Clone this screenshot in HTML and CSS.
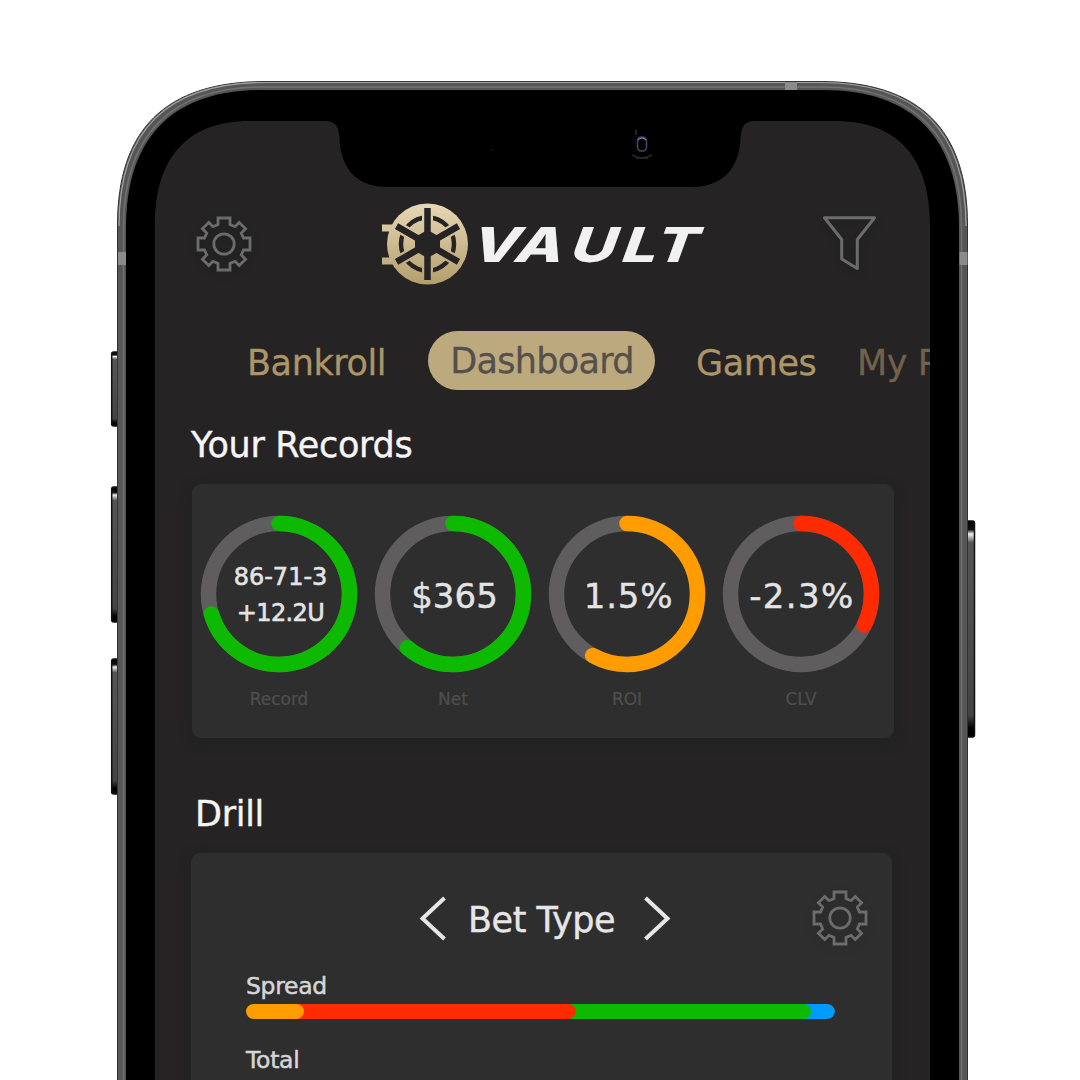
FILE: index.html
```html
<!DOCTYPE html>
<html lang="en">
<head>
<meta charset="utf-8">
<title>Vault</title>
<link rel="stylesheet" href="styles.css">
</head>
<body>
<div class="stage">
  <svg class="device" width="1080" height="1080" viewBox="0 0 1080 1080" aria-hidden="true">
    <defs>
      <linearGradient id="key" x1="0" x2="0" y1="0" y2="1">
        <stop offset="0" stop-color="#000"/><stop offset=".04" stop-color="#111"/><stop offset=".06" stop-color="#eee"/><stop offset=".1" stop-color="#555"/><stop offset=".9" stop-color="#444"/><stop offset=".96" stop-color="#000"/>
      </linearGradient>
    </defs>
    <g fill="url(#key)" stroke="#111" stroke-width="1.5">
      <rect x="111.700" y="352" width="9" height="74" rx="2"/>
      <rect x="111.700" y="487" width="9" height="135" rx="2"/>
      <rect x="111.700" y="659" width="9" height="135" rx="2"/>
      <rect x="965" y="521" width="9.500" height="216" rx="2"/>
    </g>
    <path class="rim" d="M117.500 1090V225C117.500 130 165 81.500 265 81.500H820C920 81.500 967.500 130 967.500 225V1090"/>
    <path class="rim-light" d="M123.500 1090V227C123.500 136 170 87 263 87H822C915 87 961.500 136 961.500 227V1090"/>
    <path class="rim-shine" d="M119 226C119 131 166 82.500 265 82.500H820C919 82.500 966 131 966 226"/>
    <path class="marker" d="M785 82h12v8h-12zM118 252h8v13h-8zM959.500 252h8v13h-8z"/>
    <path d="M126 1090V228C126 138 172 90 262 90H823C913 90 959 138 959 228V1090z"/>
    <path class="glass" d="M155 1090V225C155 160 185 121 250 121H325C336 121 339 127 339.500 139C341 170 358 187 387 187H692C721 187 739 170 740.500 139C741 127 744 121 755 121H835C900 121 930 160 930 225V1090z"/>
    <g fill="none">
      <rect x="637.500" y="137" width="9" height="14" rx="4" stroke="#46436a" stroke-width="1.600"/>
      <path d="M638 140q4-4 8 0" stroke="#9d9cc0"/>
      <path d="M632 155q10 6 20 0M636 158h12M636 130v5" stroke="#242424" stroke-width="2"/>
    </g>
    <circle cx="492" cy="150" r="1" fill="#181818"/>
  </svg>

  <main class="screen">
    <header class="top">
      <svg class="gear" viewBox="-28 -28 56 56"><use href="#gear"/></svg>
      <svg class="logo" viewBox="380 200 330 88" role="img" aria-label="Vault">
        <defs>
          <linearGradient id="gold" x1="0" x2="0" y1="0" y2="1"><stop offset="0" stop-color="#e8d8b6"/><stop offset="1" stop-color="#b39d6c"/></linearGradient>
          <mask id="wheel" maskUnits="userSpaceOnUse" x="380" y="200" width="90" height="90">
            <g transform="translate(427.500 244)">
              <circle r="40.500" fill="#fff"/>
              <path d="M-45.500-19.500h14v7h-14zM-45.500 13.500h14v7h-14z" fill="#fff"/>
              <circle r="26.500" fill="none" stroke="#000" stroke-width="4.500"/>
              <path d="M0-32V32M-27.700-16L27.700 16M-27.700 16L27.700-16" stroke="#fff" stroke-width="11"/>
              <path d="M0-36V36M-31-17.900L31 17.900M-31 17.900L31-17.900" stroke="#000" stroke-width="6.500"/>
              <path d="M0-14L12.500-7V7L0 14L-12.500 7V-7z"/>
            </g>
          </mask>
        </defs>
        <rect x="380" y="203" width="90" height="82" fill="url(#gold)" mask="url(#wheel)"/>
        <text class="wordmark" transform="translate(465 261.500) skewX(-20) scale(1.3 1)" x="2 36 78.500 118 143.500" y="0">VAULT</text>
      </svg>
      <svg class="funnel" viewBox="820 214 60 60"><path d="M824.500 217.800H874.600L857.300 239.500V268.500L841.700 259V239.500z"/></svg>
    </header>

    <nav class="tabs">
      <a class="tab">Bankroll</a>
      <a class="tab active">Dashboard</a>
      <a class="tab">Games</a>
      <a class="tab faded">My P</a>
    </nav>

    <h2 class="title records-title">Your Records</h2>
    <section class="card records">
      <div class="stat">
        <div class="dial">
          <svg class="ring green" viewBox="0 0 158 158"><circle class="track" cx="79" cy="79" r="70.500"/><circle class="arc" cx="79" cy="79" r="70.500" pathLength="100" stroke-dasharray="70.4 100"/></svg>
          <div class="value small"><span>86-71-3</span><span>+12.2U</span></div>
        </div>
        <div class="label">Record</div>
      </div>
      <div class="stat">
        <div class="dial">
          <svg class="ring green" viewBox="0 0 158 158"><circle class="track" cx="79" cy="79" r="70.500"/><circle class="arc" cx="79" cy="79" r="70.500" pathLength="100" stroke-dasharray="61.2 100"/></svg>
          <div class="value">$365</div>
        </div>
        <div class="label">Net</div>
      </div>
      <div class="stat">
        <div class="dial">
          <svg class="ring orange" viewBox="0 0 158 158"><circle class="track" cx="79" cy="79" r="70.500"/><circle class="arc" cx="79" cy="79" r="70.500" pathLength="100" stroke-dasharray="58.1 100"/></svg>
          <div class="value percent">1.5%</div>
        </div>
        <div class="label">ROI</div>
      </div>
      <div class="stat">
        <div class="dial">
          <svg class="ring red" viewBox="0 0 158 158"><circle class="track" cx="79" cy="79" r="70.500"/><circle class="arc" cx="79" cy="79" r="70.500" pathLength="100" stroke-dasharray="32.3 100"/></svg>
          <div class="value percent negative">-2.3%</div>
        </div>
        <div class="label">CLV</div>
      </div>
    </section>

    <h2 class="title drill-title">Drill</h2>
    <section class="card drill">
      <div class="picker">
        <svg class="chevron" viewBox="0 0 30 46"><path d="M27.500 3L5.500 23.500L27.500 44"/></svg>
        <span class="picker-name">Bet Type</span>
        <svg class="chevron" viewBox="0 0 30 46"><path d="M2.500 3L24.500 23.500L2.500 44"/></svg>
        <svg class="gear" viewBox="-28 -28 56 56">
          <g id="gear"><path d="M-6-26H6V-19.500L11-17.300L15.200-21.600L21.600-15.200L17.300-11L19.500-6H26V6H19.500L17.300 11L21.600 15.200L15.200 21.600L11 17.300L6 19.500V26H-6V19.500L-11 17.300L-15.200 21.600L-21.600 15.200L-17.300 11L-19.500 6H-26V-6H-19.500L-17.300-11L-21.600-15.200L-15.200-21.600L-11-17.300L-6-19.500z"/><circle r="10.200"/></g>
        </svg>
      </div>
      <div class="row-name">Spread</div>
      <div class="bar">
        <i class="seg orange" style="width:58px"></i><i class="seg red" style="width:272px"></i><i class="seg green" style="width:235px"></i><i class="seg blue" style="width:24px"></i>
      </div>
      <div class="row-name">Total</div>
    </section>
  </main>
</div>
</body>
</html>
```

FILE: styles.css
```css
* { box-sizing: border-box; }
body { margin: 0; background: #fff; }
.stage {
  position: relative;
  width: 1080px;
  height: 1080px;
  overflow: hidden;
  font-family: "DejaVu Sans", sans-serif;
}
.device { position: absolute; inset: 0; }
.rim { fill: #565656; stroke: #333; stroke-width: 1; }
.rim-light { fill: none; stroke: #727272; stroke-width: 1.5; }
.rim-shine { fill: none; stroke: #a5a5a5; stroke-width: 1.2; }
.marker { fill: #8b8b8b; }
.glass { fill: #252324; }

.screen {
  position: relative;
  width: 775px;
  height: 1080px;
  margin-left: 155px;
  padding-top: 200px;
  overflow: hidden;
}
.top {
  display: flex;
  align-items: center;
  height: 88px;
  padding-left: 41px;
}
.gear {
  flex: none;
  width: 56px;
  height: 56px;
  fill: none;
  stroke: #6c6c6c;
  stroke-width: 2.8;
  filter: drop-shadow(0 3px 4px rgba(0, 20, 10, .2));
}
.logo { flex: none; width: 330px; height: 88px; margin-left: 128px; overflow: visible; }
.wordmark { font: 800 48px Inter, sans-serif; fill: #f1f1f1; }
.funnel {
  flex: none;
  width: 60px;
  height: 60px;
  margin-left: 110px;
  fill: none;
  stroke: #6c6c6c;
  stroke-width: 3;
  stroke-linejoin: round;
  filter: drop-shadow(0 3px 4px rgba(0, 20, 10, .2));
}

.tabs {
  display: flex;
  align-items: center;
  height: 59px;
  margin-top: 43px;
  padding-left: 92px;
  color: #ac9668;
  font-size: 35px;
  white-space: nowrap;
  letter-spacing: -.4px;
  -webkit-text-stroke: .3px;
}
.tab { flex: none; width: 181px; padding-top: 6px; line-height: 57px; }
.tab.active {
  width: 227px;
  height: 59px;
  margin-right: 41px;
  padding: 2px 0 0 1px;
  border-radius: 30px;
  background: #bca97d;
  color: #55504b;
  text-align: center;
  letter-spacing: -.7px;
}
.tab + .tab:nth-child(3) { width: 161px; }
.tab.faded { color: #70624b; }

.title {
  margin: 0;
  color: #f5f5f5;
  font-size: 35px;
  font-weight: 400;
  line-height: 44px;
  letter-spacing: -.3px;
  -webkit-text-stroke: .4px;
}
.records-title { margin-top: 33px; padding-left: 36px; }
.drill-title { margin-top: 54px; padding-left: 40px; }

.card {
  border-radius: 9px;
  background: #2e2e2e;
  box-shadow: 0 4px 14px rgba(25, 32, 28, .4);
}
.records {
  display: grid;
  grid-template-columns: repeat(4, 1fr);
  width: 702px;
  height: 254px;
  margin: 17px 0 0 37px;
  padding: 31px 6px 0 0;
}
.stat { display: flex; flex-direction: column; align-items: center; }
.dial { display: grid; place-items: center; width: 158px; height: 158px; }
.dial > * { grid-area: 1 / 1; }
.ring { width: 158px; height: 158px; transform: rotate(-90deg); fill: none; stroke-width: 15.5; }
.track { stroke: #5f5d5e; }
.arc { stroke: currentColor; stroke-linecap: round; }
.ring.green { color: #0dba00; }
.ring.orange { color: #ff9d00; }
.ring.red { color: #ff2b00; }
.value {
  padding: 4px 0 0 3px;
  color: #e4e4e4;
  font-size: 34px;
  line-height: 40px;
  -webkit-text-stroke: .4px;
}
.value.percent { letter-spacing: .8px; }
.value.negative { padding-left: 2px; letter-spacing: 1.4px; }
.value.small {
  display: flex;
  flex-direction: column;
  align-items: center;
  padding: 2px 0 0 3px;
  font-size: 24px;
  line-height: 36px;
  -webkit-text-stroke: .6px;
}
.value.small span + span { letter-spacing: -.6px; }
.label { margin-top: 15px; color: #504e4d; font-size: 17px; line-height: 22px; -webkit-text-stroke: .2px; }

.drill { width: 701px; height: 260px; margin: 17px 0 0 36px; padding: 36px 24px 0 55px; }
.picker { display: flex; align-items: center; height: 58px; padding-left: 171px; }
.chevron { flex: none; width: 30px; height: 46px; fill: none; stroke: #e6e6e6; stroke-width: 4; }
.picker-name {
  width: 196px;
  padding: 4px 0 0 21px;
  color: #e6e6e6;
  font-size: 35px;
  letter-spacing: -.45px;
  white-space: nowrap;
  -webkit-text-stroke: .4px;
}
.picker .gear { margin-left: 139px; }
.row-name {
  height: 28px;
  margin-top: 25px;
  color: #d6d6d6;
  font-size: 23.5px;
  line-height: 28px;
  letter-spacing: -.3px;
  -webkit-text-stroke: .5px;
}
.bar { display: flex; width: 589px; height: 15px; margin-top: 4px; border-radius: 8px; overflow: hidden; }
.bar + .row-name { margin-top: 27px; }
.seg { flex: none; height: 15px; border-radius: 0 8px 8px 0; }
.seg.orange { background: #ff9d00; box-shadow: 8px 0 #ff2b00; z-index: 3; }
.seg.red { background: #ff2b00; box-shadow: 8px 0 #0dba00; z-index: 2; }
.seg.green { background: #0dba00; box-shadow: 8px 0 #009bff; z-index: 1; }
.seg.blue { background: #009bff; }
```
